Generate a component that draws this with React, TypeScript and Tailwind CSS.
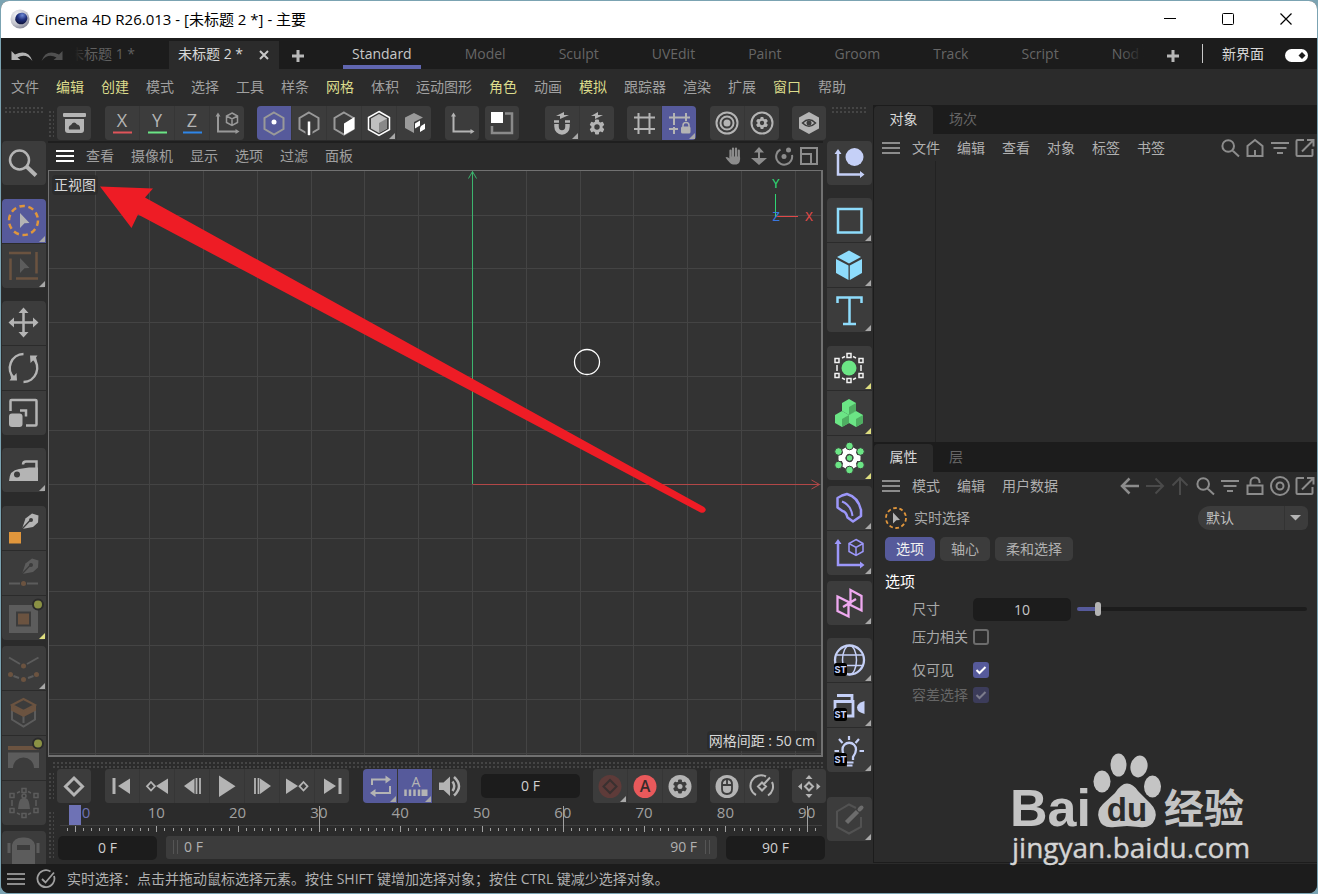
import { useState, type ReactNode } from "react";
import clsx from "clsx";

type Tool = {
  label: string;
  icon: ReactNode;
  active?: boolean;
  disabled?: boolean;
  corner?: "gray" | "yellow";
};

type ToolGroup = {
  className: string;
  tools: Tool[];
};

const GRAY = "#b4b4b4";
const DIM = "#5c5c5c";
const BROWN = "#6b5340";
const ORANGE = "#e0963c";
const PALE = "#c5d0f7";
const CYAN = "#8edcfc";
const GREEN = "#6be585";
const PURPLE = "#9c97fa";
const PINK = "#efa9f0";

/* ---------- small drawing helpers ---------- */

function Small({ children }: { children: ReactNode }) {
  return (
    <svg viewBox="0 0 34 34" className="size-[34px]" fill="none" stroke={GRAY} strokeWidth="2" aria-hidden="true">
      {children}
    </svg>
  );
}

function Big({ children }: { children: ReactNode }) {
  return (
    <svg viewBox="0 0 44 44" className="size-11" fill="none" stroke={GRAY} strokeWidth="2" aria-hidden="true">
      {children}
    </svg>
  );
}

function Hex({ color = "#999" }: { color?: string }) {
  return <path d="M17 6.5 26.5 12V23L17 28.5 7.5 23V12Z" stroke={color} />;
}

function Cog({ cx, cy, r, fill, hole, turn = 0 }: { cx: number; cy: number; r: number; fill: string; hole: string; turn?: number }) {
  return (
    <g transform={`translate(${cx} ${cy}) rotate(${turn})`} stroke="none">
      <circle r={r * 0.76} fill={fill} />
      {[0, 60, 120].map((a) => (
        <rect key={a} x={-r * 0.27} y={-r} width={r * 0.54} height={r * 2} rx="1" fill={fill} transform={`rotate(${a})`} />
      ))}
      <circle r={r * 0.36} fill={hole} />
    </g>
  );
}

function Cursor({ color }: { color: string }) {
  return <path d="M18 14 27.5 24 22.5 24.3 18 29Z" fill={color} stroke="none" />;
}

function Badge() {
  return (
    <g stroke="none">
      <rect x="7" y="25" width="13" height="13" rx="2.5" fill="#000" />
      <text x="13.5" y="35" fontSize="10" fontWeight="700" textAnchor="middle" fill={PALE} fontFamily="Liberation Mono, monospace">
        ST
      </text>
    </g>
  );
}

function AxisLetter({ letter, color }: { letter: string; color: string }) {
  return (
    <Small>
      <text x="17" y="21" fontSize="18" textAnchor="middle" fill={GRAY} stroke="none">
        {letter}
      </text>
      <path d="M8 26.5H27" stroke={color} strokeWidth="2" />
    </Small>
  );
}

function Pen({ color }: { color: string }) {
  return (
    <g stroke="none">
      <path d="M20 23 23.5 12.5 30 7.5 36.5 9.5 36 16.5 31 21Z" fill={color} />
      <path d="M20 23 28 14.5" stroke="#3c3c3c" strokeWidth="1.3" />
      <circle cx="29" cy="14" r="2" fill="#3c3c3c" />
    </g>
  );
}

function Handles({ color }: { color: string }) {
  const pts = [
    [22, 9.5],
    [34, 14.5],
    [34, 29.5],
    [22, 34.5],
    [10, 29.5],
    [10, 14.5],
  ];
  return (
    <g stroke={color} strokeWidth="1.5">
      <path d="M15 12 18 10.5M26 10.5 29 12M34 19V25M29 32 26 33.5M18 33.5 15 32M10 25V19" />
      {pts.map(([x, y]) => (
        <rect key={`${x}-${y}`} x={x - 2} y={y - 2} width="4" height="4" fill="#3c3c3c" />
      ))}
    </g>
  );
}

function MiniCube({ x, y }: { x: number; y: number }) {
  return (
    <g transform={`translate(${x} ${y})`} stroke="none">
      <path d="M0 -8 7 -4V4L0 8 -7 4V-4Z" fill={GREEN} />
      <path d="M0 0 7 -4V4L0 8Z" fill="#4fae62" />
    </g>
  );
}

/* ---------- top tool bar ---------- */

const topGroups: ToolGroup[] = [
  {
    className: "",
    tools: [
      {
        label: "资产浏览器",
        icon: (
          <Small>
            <rect x="6" y="7" width="23" height="4" rx="1" fill={GRAY} stroke="none" />
            <path d="M8 13H27V24Q27 27 24 27H11Q8 27 8 24Z" fill={GRAY} stroke="none" />
            <path d="M12 23.5Q11 20 14 19Q17 14.5 20 18.5Q23.5 19 23 23.5Z" fill="#3c3c3c" stroke="none" />
          </Small>
        ),
      },
    ],
  },
  {
    className: "ml-3.5",
    tools: [
      { label: "X 轴", icon: <AxisLetter letter="X" color="#e0555a" /> },
      { label: "Y 轴", icon: <AxisLetter letter="Y" color="#6be585" /> },
      { label: "Z 轴", icon: <AxisLetter letter="Z" color="#2f86e8" /> },
      {
        label: "坐标系统",
        icon: (
          <Small>
            <path d="M8 9V25.5H26" stroke="#999" />
            <path d="M5.5 10.5 8 6.5 10.5 10.5ZM25.5 23 29.5 25.5 25.5 28Z" fill="#999" stroke="none" />
            <path d="M22 7 27.5 10V16.5L22 19.5 16.5 16.5V10ZM16.5 10 22 13 27.5 10M22 13V19.5" strokeWidth="1.5" stroke="#999" />
          </Small>
        ),
      },
    ],
  },
  {
    className: "ml-[13px]",
    tools: [
      {
        label: "点",
        active: true,
        icon: (
          <Small>
            <Hex />
            <circle cx="17" cy="16" r="2.5" fill="#fff" stroke="none" />
          </Small>
        ),
      },
      {
        label: "边",
        icon: (
          <Small>
            <Hex />
            <path d="M17 15.5V29" stroke="#3c3c3c" strokeWidth="7" />
            <path d="M17 15.5V29" stroke="#fff" strokeWidth="2.5" />
          </Small>
        ),
      },
      {
        label: "多边形",
        icon: (
          <Small>
            <Hex />
            <path d="M17 17.5 27.5 11V23L17 29Z" fill="#fff" stroke="none" />
          </Small>
        ),
      },
      {
        label: "模型",
        corner: "gray",
        icon: (
          <Small>
            <path d="M17 5.5 27.5 11.5V23.5L17 29.5 6.5 23.5V11.5Z" stroke="#fff" strokeWidth="1.5" />
            <path d="M17 8 25 12.5V22.5L17 27 9 22.5V12.5Z" fill="#c0c0c0" stroke="none" />
            <path d="M17 17 25 12.5V22.5L17 27Z" fill="#888" stroke="none" />
          </Small>
        ),
      },
      {
        label: "纹理",
        icon: (
          <Small>
            <path d="M17 7 26 11.5 17 16V27L8 22V11.5Z" fill="#9a9a9a" stroke="none" />
            <path d="M18 17.5 23 14.5V19.5L18 22.5ZM24 20 28 17.5V23L23 26V22Z" fill="#fff" stroke="none" />
          </Small>
        ),
      },
    ],
  },
  {
    className: "ml-3.5",
    tools: [
      {
        label: "启用轴心",
        icon: (
          <Small>
            <path d="M8.5 9V25.5H26" />
            <path d="M6 10.5 8.5 6.5 11 10.5ZM25.5 23 29.5 25.5 25.5 28Z" fill={GRAY} stroke="none" />
          </Small>
        ),
      },
    ],
  },
  {
    className: "ml-1.5",
    tools: [
      {
        label: "工作平面",
        icon: (
          <Small>
            <path d="M20 7.5H27V27H7V20" stroke="#8a8a8a" strokeWidth="2.5" />
            <rect x="6" y="6" width="12" height="11" fill="#fff" stroke="none" />
          </Small>
        ),
      },
    ],
  },
  {
    className: "ml-[26px]",
    tools: [
      {
        label: "捕捉",
        corner: "gray",
        icon: (
          <Small>
            <path d="M11.5 18V20.5A5.5 6 0 0 0 22.5 20.5V18" strokeWidth="4.5" />
            <path d="M9 15.5H14M20 15.5H25" strokeWidth="2.5" />
            <path d="M11 10 19 6V9H24L15 13V10Z" fill={GRAY} stroke="none" />
          </Small>
        ),
      },
      {
        label: "捕捉设置",
        icon: (
          <Small>
            <Cog cx={17} cy={21} r={7.5} fill={GRAY} hole="#3c3c3c" />
            <path d="M11 10 18 6V9H23L15 13V10Z" fill={GRAY} stroke="none" />
          </Small>
        ),
      },
    ],
  },
  {
    className: "ml-[13px]",
    tools: [
      { label: "网格", icon: <Small><path d="M11.5 7V28M22.5 7V28M7 11.5H28M7 23H28" /></Small> },
      {
        label: "锁定网格",
        active: true,
        corner: "gray",
        icon: (
          <Small>
            <path d="M12 7V19M12 21V28M24 7V15M7 11.5H28M7 23H16" />
            <path d="M21 21V19.5A3 3 0 0 1 27 19.5V21" strokeWidth="1.5" />
            <rect x="19" y="20.5" width="9.5" height="7" rx="1.5" fill={GRAY} stroke="none" />
          </Small>
        ),
      },
    ],
  },
  {
    className: "ml-3.5",
    tools: [
      {
        label: "柔和选择",
        icon: (
          <Small>
            <circle cx="17" cy="17" r="10.5" />
            <circle cx="17" cy="17" r="6.5" />
            <circle cx="17" cy="17" r="3.5" fill={GRAY} stroke="none" />
          </Small>
        ),
      },
      {
        label: "选择设置",
        icon: (
          <Small>
            <circle cx="17" cy="17" r="10.5" />
            <Cog cx={17} cy={17} r={6} fill={GRAY} hole="#3c3c3c" />
          </Small>
        ),
      },
    ],
  },
  {
    className: "ml-[13px]",
    tools: [
      {
        label: "独显",
        icon: (
          <Small>
            <path d="M17 6 27 11.5V22.5L17 28 7 22.5V11.5Z" fill={GRAY} stroke="none" />
            <path d="M10.5 17Q17 10.5 23.5 17Q17 23.5 10.5 17Z" stroke="#3c3c3c" strokeWidth="1.5" fill="none" />
            <circle cx="17" cy="17" r="2.5" fill="#3c3c3c" stroke="none" />
          </Small>
        ),
      },
    ],
  },
];

/* ---------- left tools ---------- */

const leftGroups: ToolGroup[] = [
  {
    className: "",
    tools: [
      {
        label: "搜索",
        icon: (
          <Big>
            <circle cx="17.5" cy="19" r="9.5" strokeWidth="2.5" />
            <path d="M24.5 25.5 34 34.5" strokeWidth="4" />
          </Big>
        ),
      },
    ],
  },
  {
    className: "mt-3.5",
    tools: [
      {
        label: "实时选择",
        active: true,
        corner: "gray",
        icon: (
          <Big>
            <circle cx="21.5" cy="21.5" r="14.5" stroke={ORANGE} strokeWidth="2.5" strokeDasharray="5.5 3.61" />
            <Cursor color={GRAY} />
          </Big>
        ),
      },
      {
        label: "框选",
        disabled: true,
        corner: "gray",
        icon: (
          <Big>
            <path d="M7 9H29M34.5 8V29.5M36 34.5H14M8.5 36V14.5" stroke={BROWN} strokeWidth="2.5" />
            <Cursor color={DIM} />
          </Big>
        ),
      },
    ],
  },
  {
    className: "mt-[13px]",
    tools: [
      {
        label: "移动",
        icon: (
          <Big>
            <path d="M21.5 10V33M10 21.5H33" strokeWidth="2.5" />
            <path d="M21.5 6.5 26.5 12H16.5ZM21.5 36.5 16.5 31H26.5ZM6.5 21.5 12 16.5V26.5ZM36.5 21.5 31 26.5V16.5Z" fill={GRAY} stroke="none" />
          </Big>
        ),
      },
      {
        label: "旋转",
        icon: (
          <Big>
            <path d="M21.5 8A14 14 0 0 0 12 32M21.5 36A14 14 0 0 0 31 12" strokeWidth="2.5" />
            <path d="M28 9.5H35.5L34 11.5 35 15 32 13.5 28.5 17ZM15 34.5H7.5L9 32.5 8.5 29 11.5 30.5 14.5 27Z" fill={GRAY} stroke="none" />
          </Big>
        ),
      },
      {
        label: "缩放",
        icon: (
          <Big>
            <path d="M8.5 20V10Q8.5 9 9.5 9H33.5Q34.5 9 34.5 10V33.5Q34.5 34.5 33.5 34.5H24M18 19.5H24V25.5" strokeWidth="2.5" />
            <rect x="7" y="22.5" width="13.5" height="13.5" rx="3" fill={GRAY} stroke="none" />
          </Big>
        ),
      },
    ],
  },
  {
    className: "mt-[13px]",
    tools: [
      {
        label: "放置",
        corner: "gray",
        icon: (
          <Big>
            <path d="M7 33Q7.500 22 17 21L27 19.500H36V33Z" fill={GRAY} stroke="none" />
            <path d="M21 16.500Q21 13.500 24 13.500H34.500V21" strokeWidth="2.500" />
            <circle cx="15" cy="26.500" r="3" fill="#3c3c3c" stroke="none" />
          </Big>
        ),
      },
    ],
  },
  {
    className: "mt-3.5",
    tools: [
      {
        label: "样条画笔",
        icon: (
          <Big>
            <Pen color={GRAY} />
            <rect x="7" y="26" width="12" height="11.5" fill={ORANGE} stroke="none" />
          </Big>
        ),
      },
      {
        label: "草绘",
        disabled: true,
        icon: (
          <Big>
            <Pen color={DIM} />
            <path d="M7 32.5H18M25 32.5H36" stroke={DIM} />
            <circle cx="21.5" cy="32.5" r="2.5" fill={BROWN} stroke="none" />
          </Big>
        ),
      },
      {
        label: "挤压",
        disabled: true,
        corner: "yellow",
        icon: (
          <Big>
            <rect x="7" y="9" width="29" height="28" fill={DIM} stroke="none" />
            <rect x="14" y="15.5" width="15" height="15" fill="#3c3c3c" stroke="none" />
            <rect x="16" y="17.5" width="11" height="11" fill={BROWN} stroke="none" />
            <circle cx="36" cy="8.5" r="5" fill="#8b9244" stroke="#2b2b2b" strokeWidth="2" />
          </Big>
        ),
      },
    ],
  },
  {
    className: "mt-1.5",
    tools: [
      {
        label: "缝合",
        disabled: true,
        corner: "gray",
        icon: (
          <Big>
            <path d="M7 11.5 18 18M25 18 36.5 11.5M11.5 30 17 32M26 32 31.5 30" stroke={DIM} />
            <circle cx="21.5" cy="20" r="2.5" fill={BROWN} stroke="none" />
            <circle cx="21.5" cy="33.5" r="2.5" fill={BROWN} stroke="none" />
            <circle cx="8.5" cy="28.5" r="2.5" fill={BROWN} stroke="none" />
            <circle cx="34.5" cy="28.5" r="2.5" fill={BROWN} stroke="none" />
          </Big>
        ),
      },
      {
        label: "倒角",
        disabled: true,
        icon: (
          <Big>
            <path d="M10 19V28.5L21.5 35.5 33 28.5V19M21.5 24V32" stroke={DIM} />
            <path d="M10 14 21.5 8 33 14 21.5 20Z" stroke={BROWN} />
            <path d="M9 14 21.5 20.5 34 14V19.5L21.5 26 9 19.5Z" fill={BROWN} stroke="none" />
          </Big>
        ),
      },
      {
        label: "桥接",
        disabled: true,
        icon: (
          <Big>
            <path d="M6 12H37" stroke={BROWN} strokeWidth="4" />
            <path d="M6 16.5H37V32H32A10.5 10.5 0 0 0 11 32H6Z" fill={DIM} stroke="none" />
            <circle cx="36" cy="7.5" r="5" fill="#8b9244" stroke="#2b2b2b" strokeWidth="2" />
          </Big>
        ),
      },
      {
        label: "焊接",
        disabled: true,
        icon: (
          <Big>
            <Handles color={DIM} />
            <path d="M16 28Q17 17 20 17.5L22 15.5 24 17.5Q27 17 28 28Z" fill={DIM} stroke="none" />
            <circle cx="22" cy="15" r="2" stroke={DIM} strokeWidth="1.5" />
          </Big>
        ),
      },
    ],
  },
  {
    className: "mt-1.5",
    tools: [
      {
        label: "机器人",
        disabled: true,
        icon: (
          <Big>
            <path d="M10 44V14Q12 6 21.5 6.5Q31 6 33 14V44Z" fill={DIM} stroke="none" />
            <path d="M7 12V22M36 12V22" stroke={DIM} strokeWidth="3" />
            <rect x="15" y="14" width="13" height="5" fill="#3c3c3c" stroke="none" />
          </Big>
        ),
      },
    ],
  },
];

/* ---------- right tools ---------- */

const rightGroups: ToolGroup[] = [
  {
    className: "",
    tools: [
      {
        label: "空对象",
        icon: (
          <Big>
            <path d="M11 12V33.5H34" stroke={PALE} strokeWidth="2.5" />
            <path d="M7.5 13 11 8 14.5 13ZM33 30 37.5 33.5 33 37Z" fill={PALE} stroke="none" />
            <circle cx="27.5" cy="16" r="9" fill={PALE} stroke="none" />
          </Big>
        ),
      },
    ],
  },
  {
    className: "mt-[13px]",
    tools: [
      {
        label: "矩形",
        corner: "gray",
        icon: <Big><rect x="11" y="11" width="23.5" height="23.5" stroke={CYAN} strokeWidth="2.5" /></Big>,
      },
      {
        label: "立方体",
        corner: "gray",
        icon: (
          <Big>
            <g fill={CYAN} stroke="none">
              <path d="M22 7.5 34 14 22 20.5 10 14Z" />
              <path d="M9 16 21.5 22.5V37L9 30Z" />
              <path d="M35 16 22.8 22.5V37L35 30Z" />
            </g>
          </Big>
        ),
      },
      {
        label: "文本",
        corner: "gray",
        icon: <Big><path d="M10.5 15V9.5H34.5V15M22.5 9.5V36M16 36H29" stroke={CYAN} strokeWidth="2.5" /></Big>,
      },
    ],
  },
  {
    className: "mt-3.5",
    tools: [
      {
        label: "细分曲面",
        corner: "yellow",
        icon: (
          <Big>
            <Handles color="#f2f2f2" />
            <circle cx="22" cy="22" r="7.5" fill={GREEN} stroke="none" />
          </Big>
        ),
      },
      {
        label: "克隆",
        corner: "yellow",
        icon: (
          <Big>
            <MiniCube x={22} y={16} />
            <MiniCube x={15} y={28} />
            <MiniCube x={29} y={28} />
          </Big>
        ),
      },
      {
        label: "力场",
        corner: "yellow",
        icon: (
          <Big>
            <Cog cx={22.5} cy={22} r={11} fill="#fff" hole="#3c3c3c" turn={30} />
            <g fill={GREEN} stroke="#3c3c3c" strokeWidth="1">
              <circle cx="22.5" cy="22" r="3.3" />
              <circle cx="22.5" cy="10" r="3.8" />
              <circle cx="22.5" cy="34" r="3.8" />
              <circle cx="11.5" cy="15.5" r="3.8" />
              <circle cx="33.5" cy="15.5" r="3.8" />
              <circle cx="11.5" cy="29" r="3.8" />
              <circle cx="33.5" cy="29" r="3.8" />
            </g>
          </Big>
        ),
      },
    ],
  },
  {
    className: "mt-1.5",
    tools: [
      {
        label: "弯曲",
        corner: "gray",
        icon: (
          <Big>
            <path d="M15 9.5 20 8Q31 11 34 24L34 30 26 35.5 20.5 31.5Q19 25.5 15.5 25L10.5 21.5V12Z" stroke={PURPLE} strokeWidth="2.5" strokeLinejoin="round" />
            <path d="M15 15.5Q24 19 25.5 30" stroke={PURPLE} />
          </Big>
        ),
      },
      {
        label: "域",
        corner: "gray",
        icon: (
          <Big>
            <path d="M11 12V34H34" stroke={PURPLE} strokeWidth="2.5" />
            <path d="M7.5 13 11 8 14.5 13ZM33 30.5 37.5 34 33 37.5Z" fill={PURPLE} stroke="none" />
            <path d="M29 8.5 36 12.5V20.5L29 24.5 22 20.5V12.5ZM22 12.5 29 16.5 36 12.5M29 16.5V24" stroke={PURPLE} strokeWidth="1.5" />
          </Big>
        ),
      },
    ],
  },
  {
    className: "mt-1.5",
    tools: [
      {
        label: "对称",
        corner: "gray",
        icon: (
          <Big>
            <path d="M10.5 15.5 21.5 21V35.5L10.5 30ZM23.5 9 34.5 15V29.5L23.5 24ZM16 26 29 18" stroke={PINK} strokeWidth="2.3" />
          </Big>
        ),
      },
    ],
  },
  {
    className: "mt-[13px]",
    tools: [
      {
        label: "天空",
        corner: "gray",
        icon: (
          <Big>
            <g stroke={PALE}>
              <circle cx="22.5" cy="22" r="14.5" strokeWidth="2.3" />
              <ellipse cx="22.5" cy="22" rx="7" ry="14.5" strokeWidth="1.5" />
              <path d="M10 17H35M10 27.5H35" strokeWidth="1.5" />
            </g>
            <Badge />
          </Big>
        ),
      },
      {
        label: "摄像机",
        corner: "gray",
        icon: (
          <Big>
            <path d="M10 12.5H25V17M8 28V18.5H26V33H20" stroke={PALE} strokeWidth="2.8" />
            <path d="M37.5 18V31Q30 29 30 24.5Q30 20 37.5 18Z" fill={PALE} stroke="none" />
            <Badge />
          </Big>
        ),
      },
      {
        label: "灯光",
        corner: "gray",
        icon: (
          <Big>
            <g stroke={PALE}>
              <path d="M19 29Q15.5 26 15.5 21.5A6.5 6.5 0 0 1 29 21.5Q29 25 26 29V32" strokeWidth="2.3" />
              <path d="M20 34.5H26.5M20 37.5H25.5M22 12V8M28.5 15 32 11M15.5 15 12 11M32.5 23H37M12 23H7.5" strokeWidth="2.2" />
            </g>
            <Badge />
          </Big>
        ),
      },
    ],
  },
  {
    className: "mt-[25px]",
    tools: [
      {
        label: "编辑",
        disabled: true,
        corner: "gray",
        icon: (
          <Big>
            <path d="M29 11 22 7.5 10 14.5V30L22 36.5 34 30V20" stroke="#525252" />
            <path d="M19.5 25.5 30.5 14.5" stroke="#6c6c6c" strokeWidth="4.5" />
            <path d="M32.500 12.500 34.500 10.500" stroke="#6c6c6c" strokeWidth="4" strokeLinecap="round" />
          </Big>
        ),
      },
    ],
  },
];

/* ---------- transport ---------- */

const tri = { fill: GRAY, stroke: "none" };

const transport: Tool[] = [
  { label: "转到开始", icon: <Small><path d="M9 9V25" strokeWidth="3" /><path d="M25 9.5V25L13 17Z" {...tri} /></Small> },
  { label: "上一关键帧", icon: <Small><path d="M11 13 15 17.3 11 21.5 7 17.3Z" strokeWidth="1.8" /><path d="M28 9.5V25L16 17Z" {...tri} /></Small> },
  { label: "上一帧", icon: <Small><path d="M19.5 9.5V25L9 17Z" {...tri} /><path d="M21.5 9V25M25 9V25" strokeWidth="1.8" /></Small> },
  { label: "播放", icon: <Small><path d="M9 6.5V28L25.5 17.3Z" {...tri} /></Small> },
  { label: "下一帧", icon: <Small><path d="M15 9.5V25L26 17Z" {...tri} /><path d="M10 9V25M13.5 9V25" strokeWidth="1.8" /></Small> },
  { label: "下一关键帧", icon: <Small><path d="M6 9.5V25L18 17Z" {...tri} /><path d="M23.5 13 27.5 17.3 23.5 21.5 19.5 17.3Z" strokeWidth="1.8" /></Small> },
  { label: "转到结束", icon: <Small><path d="M9 9.5V25L21 17Z" {...tri} /><path d="M25 9V25" strokeWidth="3" /></Small> },
];

const playback: Tool[] = [
  {
    label: "循环",
    active: true,
    corner: "gray",
    icon: (
      <Small>
        <path d="M9 16V10.5H24M27 17V24H11" />
        <path d="M22.5 6.5 28 10.5 22.5 14.5ZM12.5 20 7 24 12.5 28Z" {...tri} />
      </Small>
    ),
  },
  {
    label: "全部帧",
    active: true,
    corner: "gray",
    icon: (
      <Small>
        <text x="18" y="17.5" fontSize="14" textAnchor="middle" fill={GRAY} stroke="none">A</text>
        <path d="M7.5 20.5V27M12 20.5V27M16.5 20.5V27M21 20.5V27" strokeWidth="2.5" />
        <rect x="23.5" y="20.5" width="6" height="6.5" fill={GRAY} stroke="none" />
      </Small>
    ),
  },
  {
    label: "声音",
    icon: (
      <Small>
        <path d="M6 13.5H10.5L17 7.5V27L10.5 21H6Z" {...tri} />
        <path d="M19.5 12.5Q23 17 19.5 22M21 8Q31 17 21 26.5" strokeWidth="2.5" />
      </Small>
    ),
  },
];

const record: Tool[] = [
  {
    label: "记录",
    corner: "gray",
    disabled: true,
    icon: (
      <Small>
        <circle cx="17" cy="17.5" r="11.5" fill="#5e3b39" stroke="none" />
        <path d="M17 11 23.5 17.5 17 24 10.5 17.5Z" stroke="#3a3030" />
      </Small>
    ),
  },
  {
    label: "自动关键帧",
    icon: (
      <Small>
        <circle cx="17" cy="17.5" r="11.5" fill="#e9595b" stroke="none" />
        <text x="17" y="23" fontSize="16" fontWeight="600" textAnchor="middle" fill="#3a2b2b" stroke="none">A</text>
      </Small>
    ),
  },
  {
    label: "关键帧设置",
    icon: (
      <Small>
        <circle cx="17" cy="17.5" r="11.5" fill={GRAY} stroke="none" />
        <Cog cx={17} cy={17.5} r={7} fill="#3c3c3c" hole={GRAY} />
      </Small>
    ),
  },
];

const motion: Tool[] = [
  {
    label: "鼠标",
    icon: (
      <Small>
        <circle cx="17" cy="17.5" r="11.5" fill={GRAY} stroke="none" />
        <path d="M12 15.5Q12 10 17 10Q22 10 22 15.5V20Q22 25 17 25Q12 25 12 20ZM12 16H22M17 10V16" stroke="#3c3c3c" strokeWidth="1.8" />
      </Small>
    ),
  },
  {
    label: "速度",
    icon: (
      <Small>
        <path d="M11 26A10.5 10.5 0 0 1 21 7.5M27 13A10.5 10.5 0 0 1 23 26.5M17 13.5 21 17.5 17 21.5 13 17.5ZM19 15 25 8.5" />
      </Small>
    ),
  },
];

const navTool: Tool[] = [
  {
    label: "位置",
    icon: (
      <Small>
        <path d="M17 13.5 21 17.5 17 21.5 13 17.5Z" />
        <path d="M17 6 20.5 10H13.5ZM17 29 13.5 25H20.5ZM6 17.5 10 14V21ZM28.5 17.5 24.5 21V14Z" {...tri} />
      </Small>
    ),
  },
];

/* ---------- shared pieces ---------- */

function ToolButton({ tool, size }: { tool: Tool; size: "small" | "big" }) {
  return (
    <button
      type="button"
      aria-label={tool.label}
      aria-pressed={tool.active}
      disabled={tool.disabled}
      className={clsx(
        "relative flex shrink-0 items-center",
        size === "small" ? "size-[34px]" : "h-11 w-full",
        tool.active ? "bg-[#565a9b]" : "bg-[#3c3c3c]",
      )}
    >
      {tool.icon}
      {tool.corner && (
        <svg viewBox="0 0 6 6" className="absolute right-px bottom-px size-1.5" aria-hidden="true">
          <path d="M6 0V6H0Z" fill={tool.corner === "gray" ? "#a8a8a8" : "#dede80"} />
        </svg>
      )}
    </button>
  );
}

function ToolRow({ tools, className }: { tools: Tool[]; className?: string }) {
  return (
    <div className={clsx("flex shrink-0 gap-px overflow-hidden rounded-sm bg-[#363636]", className)}>
      {tools.map((tool) => (
        <ToolButton key={tool.label} tool={tool} size="small" />
      ))}
    </div>
  );
}

function ToolColumn({ groups }: { groups: ToolGroup[] }) {
  return (
    <>
      {groups.map((group) => (
        <div
          key={group.tools[0].label}
          className={clsx("flex shrink-0 flex-col gap-px overflow-hidden rounded-sm bg-[#2b2b2b]", group.className)}
        >
          {group.tools.map((tool) => (
            <ToolButton key={tool.label} tool={tool} size="big" />
          ))}
        </div>
      ))}
    </>
  );
}

function Grip({ className }: { className: string }) {
  return <div className={clsx("shrink-0 bg-[radial-gradient(#454545_1px,transparent_1px)] bg-[size:4px_4px]", className)} />;
}

function Burger({ color }: { color: string }) {
  return (
    <svg viewBox="0 0 20 16" className="h-4 w-5 shrink-0" stroke={color} strokeWidth="2" aria-hidden="true">
      <path d="M1 3H19M1 8H19M1 13H19" />
    </svg>
  );
}

function MenuItems({ items }: { items: string[] }) {
  return (
    <>
      {items.map((item) => (
        <button key={item} type="button" className="shrink-0">
          {item}
        </button>
      ))}
    </>
  );
}

function PanelIcon({ label, dim, children }: { label: string; dim?: boolean; children: ReactNode }) {
  return (
    <button type="button" aria-label={label} className="size-5">
      <svg viewBox="0 0 20 20" className="size-5" fill="none" stroke={dim ? "#4a4a4a" : "#8c8c8c"} strokeWidth="2" aria-hidden="true">
        {children}
      </svg>
    </button>
  );
}

const searchPath = <path d="M14 8A5.8 5.8 0 1 1 2.4 8A5.8 5.8 0 1 1 14 8ZM12.3 12.3 19 18.5" />;
const filterPath = <path d="M1 5H19M3.5 10H16.5M7 15H13" />;
const openPath = <path d="M9 2H2.5Q1.5 2 1.5 3V17Q1.5 18 2.5 18H16.5Q17.5 18 17.5 17V11M7 13.5 17.5 3M12 2H18.5V8.5" />;

function Tabs({ active, other }: { active: string; other: string }) {
  return (
    <div className="flex h-7 shrink-0 bg-[#1c1c1c]" role="tablist">
      <button type="button" role="tab" aria-selected="true" className="w-[59px] rounded-t-sm bg-[#2b2b2b] pb-0.5 text-[#d8d8d8]">
        {active}
      </button>
      <button type="button" role="tab" aria-selected="false" className="px-4 pb-0.5 text-[#666]">
        {other}
      </button>
    </div>
  );
}

/* ---------- page parts ---------- */

function TitleBar() {
  return (
    <header className="flex h-[37px] shrink-0 items-center bg-white pr-0.5 pb-px pl-[9px] text-black">
      <svg viewBox="0 0 20 20" className="size-5" aria-hidden="true">
        <defs>
          <radialGradient id="shell" cx="0.35" cy="0.3" r="0.8">
            <stop offset="0" stopColor="#f4f4f8" />
            <stop offset="0.6" stopColor="#c2c3cc" />
            <stop offset="1" stopColor="#77798a" />
          </radialGradient>
          <radialGradient id="core" cx="0.7" cy="0.3" r="0.8">
            <stop offset="0" stopColor="#6f8ad6" />
            <stop offset="0.5" stopColor="#1f2f7c" />
            <stop offset="1" stopColor="#0a0f35" />
          </radialGradient>
        </defs>
        <circle cx="10" cy="10" r="9.5" fill="url(#shell)" />
        <ellipse cx="11.3" cy="9.5" rx="6.2" ry="5.7" fill="url(#core)" transform="rotate(-30 11.3 9.5)" />
      </svg>
      <h1 className="ml-[5px] flex-1 text-[15px] leading-5">Cinema 4D R26.013 - [未标题 2 *] - 主要</h1>
      <div className="flex">
        <button type="button" aria-label="最小化" className="flex h-9 w-[58px] items-center justify-center">
          <svg viewBox="0 0 12 12" className="size-3" stroke="#000"><path d="M0 5.5H12" /></svg>
        </button>
        <button type="button" aria-label="最大化" className="flex h-9 w-[58px] items-center justify-center">
          <svg viewBox="0 0 12 12" className="size-3" fill="none" stroke="#000"><rect x="0.5" y="0.5" width="11" height="11" rx="1" /></svg>
        </button>
        <button type="button" aria-label="关闭" className="flex h-9 w-[58px] items-center justify-center">
          <svg viewBox="0 0 12 12" className="size-3" stroke="#000" strokeWidth="1.2"><path d="M0.5 0.5 11.5 11.5M11.5 0.5 0.5 11.5" /></svg>
        </button>
      </div>
    </header>
  );
}

function Plus() {
  return (
    <svg viewBox="0 0 12 12" className="size-3" stroke="#b8b8b8" strokeWidth="3"><path d="M6 0V12M0 6H12" /></svg>
  );
}

const layouts = ["Standard", "Model", "Sculpt", "UVEdit", "Paint", "Groom", "Track", "Script", "Nod"];

function TabBar() {
  return (
    <div className="flex h-[31px] shrink-0 items-stretch bg-[#1c1c1c]">
      <div className="flex w-[69px] shrink-0 items-center gap-2 pt-1 pl-2.5">
        <button type="button" aria-label="撤销">
          <svg viewBox="0 0 22 14" className="h-3.5 w-[22px]" aria-hidden="true">
            <path d="M0.5 2V11H9.5L6.5 8.5Q15 3.5 21.5 12Q17 -0.5 4 5.5Z" fill="#b4b4b4" />
          </svg>
        </button>
        <button type="button" aria-label="重做">
          <svg viewBox="0 0 22 14" className="h-3.5 w-[22px]" aria-hidden="true">
            <path d="M21.5 2V11H12.5L15.5 8.5Q7 3.5 0.5 12Q5 -0.5 18 5.5Z" fill="#505050" />
          </svg>
        </button>
      </div>
      <button type="button" className="relative w-[99px] shrink-0 text-left text-[#606060]">
        未标题 1 *
        <span className="absolute inset-y-0 left-0 w-5 bg-linear-to-r from-[#1c1c1c] from-25% to-transparent" />
      </button>
      <div className="mt-[3px] flex w-[110px] shrink-0 items-center justify-between bg-[#2b2b2b] pr-2.5 pb-0.5 pl-[9px] text-[#d8d8d8]">
        <button type="button">未标题 2 *</button>
        <button type="button" aria-label="关闭标签" className="pt-0.5">
          <svg viewBox="0 0 10 10" className="size-2.5" stroke="#c8c8c8" strokeWidth="2"><path d="M1 1 9 9M9 1 1 9" /></svg>
        </button>
      </div>
      <button type="button" aria-label="新建文档" className="ml-[13px] pt-1">
        <Plus />
      </button>
      <nav className="relative ml-[39px] flex min-w-0 flex-1 gap-[35px] overflow-hidden">
        {layouts.map((name, i) => (
          <button
            key={name}
            type="button"
            className={clsx(
              "shrink-0 border-b-4 px-[9px] pt-[5px]",
              i === 0 ? "border-[#6066b0] text-[#c8c8c8]" : "border-transparent text-[#666]",
            )}
          >
            {name}
          </button>
        ))}
        <span className="absolute inset-y-0 right-0 w-6 bg-linear-to-r from-transparent to-[#1c1c1c]" />
      </nav>
      <button type="button" aria-label="新建界面" className="ml-[23px] pt-1">
        <Plus />
      </button>
      <span className="my-1.5 ml-[23px] w-px bg-[#c8c8c8]" />
      <label htmlFor="new-layout" className="ml-[19px] flex items-center text-[#d8d8d8]">新界面</label>
      <button id="new-layout" type="button" role="switch" aria-checked="true" aria-label="新界面" className="mr-[9px] ml-[21px] pt-1">
        <svg viewBox="0 0 23 13" className="h-[13px] w-[23px]" aria-hidden="true">
          <rect width="23" height="13" rx="6.5" fill="#fff" />
          <path d="M17 3 20.5 6.5 17 10 13.5 6.5Z" fill="#1c1c1c" />
        </svg>
      </button>
    </div>
  );
}

const menus = [
  "文件", "编辑", "创建", "模式", "选择", "工具", "样条", "网格", "体积", "运动图形",
  "角色", "动画", "模拟", "跟踪器", "渲染", "扩展", "窗口", "帮助",
];
const marked = ["编辑", "创建", "网格", "角色", "模拟", "窗口"];

function MenuBar() {
  return (
    <nav className="flex h-9 shrink-0 items-center gap-[17px] pl-2.5">
      {menus.map((item) => (
        <button key={item} type="button" className={clsx("shrink-0", marked.includes(item) ? "text-[#dcdc8c]" : "text-[#a0a0a0]")}>
          {item}
        </button>
      ))}
    </nav>
  );
}

const gridX = [46, 100, 154, 208, 262, 315, 369, 423, 477, 531, 584, 638, 692, 746];
const gridY = [44, 97, 151, 205, 259, 313, 367, 420, 474, 528, 582];

function Viewport() {
  return (
    <section className="flex min-h-0 flex-1 flex-col border-t-2 border-[#1f1f1f]">
      <div className="flex h-[27px] shrink-0 items-center gap-[17px] pr-1 pb-px pl-[7px] text-[#a0a0a0]">
        <button type="button" aria-label="视图菜单" className="-mr-1.5">
          <Burger color="#fff" />
        </button>
        <MenuItems items={["查看", "摄像机", "显示", "选项", "过滤", "面板"]} />
        <div className="ml-auto flex gap-[5px]">
          <PanelIcon label="平移">
            <path d="M6.5 4.5V11M9 2.5V11M12 2.5V11M14.8 4.5V12" strokeWidth="2.2" strokeLinecap="round" />
            <path d="M5.5 10.5H16Q17 17 12.5 18.5H9Q6 18 1.5 11.5Q3 10 5.5 12.5Z" fill="#8c8c8c" stroke="none" />
          </PanelIcon>
          <PanelIcon label="推拉">
            <path d="M10 5V14" />
            <path d="M10 1 15 6.5H5ZM10 19 2 12H18Z" fill="#8c8c8c" stroke="none" />
          </PanelIcon>
          <PanelIcon label="旋转视图">
            <path d="M6.5 3.5A8 8 0 1 0 18 9" />
            <circle cx="10" cy="10.5" r="2.5" fill="#8c8c8c" stroke="none" />
            <circle cx="14.5" cy="4" r="2.5" fill="#8c8c8c" stroke="none" />
          </PanelIcon>
          <PanelIcon label="切换视图">
            <path d="M2 2H18V18H2ZM2 8H12V18" />
          </PanelIcon>
        </div>
      </div>
      <div className="relative min-h-0 flex-1 overflow-hidden border-t border-r-2 border-b-2 border-l border-[#717171] bg-[#333]">
        <svg className="block size-full" role="img" aria-label="正视图网格">
          <g stroke="#444">
            {gridX.map((x) => (
              <path key={x} d={`M${x + 0.5} 0V2000`} />
            ))}
            {gridY.map((y) => (
              <path key={y} d={`M0 ${y + 0.5}H3000`} />
            ))}
          </g>
          <path d="M423.5 313V0.5M419.5 7.5 423.5 0.5 427.5 7.5" stroke="#3cb46e" fill="none" />
          <path d="M423.5 313.5H770.5M762.5 309 770.5 313.5 762.5 318" stroke="#b24747" fill="none" />
          <g fontSize="13" textAnchor="middle" fontFamily="DejaVu Sans Mono, monospace">
            <path d="M726.5 23V46" stroke="#2fd573" />
            <path d="M727 45.5H749" stroke="#e04848" />
            <text x="727" y="17" fill="#2fd573">Y</text>
            <text x="727" y="50" fill="#3a78e0">Z</text>
            <text x="760" y="50" fill="#e04848">X</text>
          </g>
          <circle cx="538" cy="191" r="12.5" fill="none" stroke="#fff" strokeWidth="1.3" />
          <path
            d="M51 15.5 104 17.5 96 26.5 655 336Q658 338.5 656 340.5Q654.5 342.5 651.5 341.5L89 43.5 82.5 57Z"
            fill="#ee1c25"
          />
        </svg>
        <span className="absolute top-1 left-[3px] rounded-sm bg-[#2b2b2b]/80 px-0.5 leading-5 text-[#d8d8d8]">正视图</span>
        <span className="absolute right-1 bottom-1 rounded-sm bg-[#2b2b2b]/80 px-0.5 leading-5 text-[#d8d8d8]">网格间距 : 50 cm</span>
      </div>
    </section>
  );
}

const TICK = 8.13;

function Ruler() {
  return (
    <svg className="block h-8 w-full overflow-visible" role="img" aria-label="时间线">
      <path d="M12 22.5H774" stroke="#3e3e3e" />
      <rect x="21" y="2" width="12" height="20" fill="#6e72b5" />
      {Array.from({ length: 93 }, (_, i) => {
        const frame = i - 1;
        const x = Math.round(27 + frame * TICK) + 0.5;
        const major = frame % 10 === 0;
        const top = frame > 0 && frame % 30 === 0 ? 3 : major ? 23 : 25;
        return <path key={frame} d={`M${x} ${top}V${major ? 29 : 28}`} stroke="#a0a0a0" />;
      })}
      <g fontSize="15" textAnchor="middle" fill="#a0a0a0">
        <text x="38" y="15" fill="#6e72b5">0</text>
        {[10, 20, 30, 40, 50, 60, 70, 80, 90].map((n) => (
          <text key={n} x={27 + n * TICK} y="15">{n}</text>
        ))}
      </g>
    </svg>
  );
}

function FrameField({ label, value }: { label: string; value: string }) {
  return (
    <input
      aria-label={label}
      defaultValue={value}
      className="h-6 w-[99px] shrink-0 rounded-[5px] bg-[#1c1c1c] pb-0.5 text-center text-[#d0d0d0]"
    />
  );
}

function Timeline() {
  return (
    <section className="flex h-[107px] shrink-0 flex-col">
      <Grip className="mt-1 ml-1 h-2" />
      <div className="flex items-center">
        <Grip className="mr-[3px] h-7 w-1.5" />
        <ToolRow tools={[{ label: "关键帧", icon: <Small><path d="M17 9 25.5 17.5 17 26 8.5 17.5Z" strokeWidth="3" /></Small> }]} />
        <ToolRow className="ml-3.5" tools={transport} />
        <ToolRow className="ml-3.5" tools={playback} />
        <div className="ml-3.5 flex"><FrameField label="当前帧" value="0 F" /></div>
        <ToolRow className="ml-[13px]" tools={record} />
        <ToolRow className="ml-[13px]" tools={motion} />
        <ToolRow className="ml-[13px]" tools={navTool} />
      </div>
      <div className="flex">
        <div className="-mr-px w-px"><Grip className="mt-2 h-12 w-1.5" /></div>
        <div className="min-w-0 flex-1">
          <Ruler />
          <div className="-mr-0.5 flex gap-[9px] pt-px pl-2.5">
            <FrameField label="起始帧" value="0 F" />
            <div className="flex h-[23px] flex-1 items-center justify-between rounded-[3px] bg-[#3c3c3c] px-[7px] pb-0.5 text-[#b0b0b0]">
              <span className="flex items-center gap-1.5">
                <i className="h-3.5 w-[5px] border-x border-[#555]" />0 F
              </span>
              <span className="flex items-center gap-2">
                90 F<i className="h-3.5 w-[5px] border-x border-[#555]" />
              </span>
            </div>
            <FrameField label="结束帧" value="90 F" />
          </div>
        </div>
      </div>
    </section>
  );
}

function ObjectPanel() {
  return (
    <section className="flex h-[338px] shrink-0 flex-col border-b-2 border-[#1c1c1c]">
      <Tabs active="对象" other="场次" />
      <div className="flex h-[27px] shrink-0 items-center gap-[17px] pr-0.5 pl-[7px] text-[#b0b0b0]">
        <button type="button" aria-label="对象菜单" className="-mr-1.5"><Burger color="#8c8c8c" /></button>
        <MenuItems items={["文件", "编辑", "查看", "对象", "标签", "书签"]} />
        <div className="ml-auto flex gap-[5px]">
          <PanelIcon label="搜索">{searchPath}</PanelIcon>
          <PanelIcon label="主页"><path d="M2.5 18V8L10 2 17.5 8V18ZM10 18V12" /></PanelIcon>
          <PanelIcon label="过滤">{filterPath}</PanelIcon>
          <PanelIcon label="弹出">{openPath}</PanelIcon>
        </div>
      </div>
      <div className="flex min-h-0 flex-1">
        <div className="w-[62px] border-r border-[#222]" />
      </div>
    </section>
  );
}

function CheckRow({ id, label, checked, disabled, className }: { id: string; label: string; checked: boolean; disabled?: boolean; className?: string }) {
  const [on, setOn] = useState(checked);
  return (
    <div className={clsx("flex h-[25px] items-center", className)}>
      <label htmlFor={id} className={clsx("w-[61px]", disabled && "text-[#666]")}>{label}</label>
      <span className="relative flex">
        <input
          id={id}
          type="checkbox"
          checked={on}
          disabled={disabled}
          onChange={() => setOn(!on)}
          className="size-4 appearance-none rounded-[3px] border-2 border-[#6c6c6c] checked:border-[#565a9b] checked:bg-[#565a9b] disabled:border-[#3c3c5a] disabled:bg-[#3c3c5a]"
        />
        {on && (
          <svg viewBox="0 0 16 16" className="pointer-events-none absolute inset-0 size-4" fill="none" stroke={disabled ? "#7c7c8c" : "#fff"} strokeWidth="2">
            <path d="M3.5 8 6.5 11 12.5 5" />
          </svg>
        )}
      </span>
    </div>
  );
}

function AttributePanel() {
  const [size, setSize] = useState(10);
  return (
    <section className="flex min-h-0 flex-1 flex-col">
      <Tabs active="属性" other="层" />
      <div className="flex h-7 shrink-0 items-center gap-[17px] pr-0.5 pl-[7px] text-[#b0b0b0]">
        <button type="button" aria-label="属性菜单" className="-mr-1.5"><Burger color="#8c8c8c" /></button>
        <MenuItems items={["模式", "编辑", "用户数据"]} />
        <div className="ml-auto flex gap-[5px]">
          <PanelIcon label="后退"><path d="M19 10H2.5M9.5 2.5 2 10 9.5 17.5" strokeWidth="2.5" /></PanelIcon>
          <PanelIcon label="前进" dim><path d="M1 10H17.5M10.5 2.5 18 10 10.5 17.5" /></PanelIcon>
          <PanelIcon label="向上" dim><path d="M10 19V2.5M2.5 9.5 10 2 17.5 9.5" /></PanelIcon>
          <PanelIcon label="搜索属性">{searchPath}</PanelIcon>
          <PanelIcon label="过滤属性">{filterPath}</PanelIcon>
          <PanelIcon label="锁定"><path d="M2.5 9.5H17.5V18H2.5ZM5.5 9V6A4.5 4.5 0 0 1 14.5 6V7" /></PanelIcon>
          <PanelIcon label="模式锁定"><circle cx="10" cy="10" r="9" /><circle cx="10" cy="10" r="3.5" /></PanelIcon>
          <PanelIcon label="弹出属性">{openPath}</PanelIcon>
        </div>
      </div>
      <div className="flex h-9 shrink-0 items-center pr-[9px] pl-2.5 text-[#a8a8a8]">
        <svg viewBox="0 0 24 24" className="size-6" fill="none" aria-hidden="true">
          <circle cx="12" cy="12" r="10" stroke={ORANGE} strokeWidth="1.8" strokeDasharray="3.7 2.58" />
          <path d="M9 6.500 16 14 12.300 14.200 9 17.500Z" fill="#b4b4b4" />
        </svg>
        <h2 className="ml-1.5 flex-1">实时选择</h2>
        <div className="relative">
          <select aria-label="预设" className="h-6 w-[110px] appearance-none rounded-l-xl rounded-r-md bg-[#3c3c3c] pl-2 text-[#c0c0c0]">
            <option>默认</option>
          </select>
          <svg viewBox="0 0 24 24" className="pointer-events-none absolute top-0 right-0 size-6" aria-hidden="true">
            <path d="M0.5 0V24" stroke="#333" />
            <path d="M6 9H17L11.5 14.5Z" fill="#b4b4b4" />
          </svg>
        </div>
      </div>
      <div className="mt-px flex gap-[5px] pl-[11px]">
        <button type="button" className="h-6 rounded-[5px] bg-[#565a9b] px-[11px] text-[#f0f0f0]">选项</button>
        <button type="button" className="h-6 rounded-[5px] bg-[#3c3c3c] px-[11px] text-[#b0b0b0]">轴心</button>
        <button type="button" className="h-6 rounded-[5px] bg-[#3c3c3c] px-[11px] text-[#b0b0b0]">柔和选择</button>
      </div>
      <h3 className="mt-2.5 pl-[11px] text-[15px] leading-5 text-white">选项</h3>
      <div className="mt-1.5 pr-2.5 pl-[38px] text-[#a8a8a8]">
        <div className="flex h-6 items-center">
          <label htmlFor="size" className="w-[61px]">尺寸</label>
          <input
            id="size"
            value={size}
            onChange={(e) => setSize(Number(e.target.value) || 0)}
            className="h-[23px] w-[98px] rounded-[5px] bg-[#1c1c1c] text-center text-[#c8c8c8]"
          />
          <input
            type="range"
            aria-label="尺寸滑块"
            min="0"
            max="125"
            value={size}
            onChange={(e) => setSize(Number(e.target.value))}
            className="ml-1.5 h-4 min-w-0 flex-1 appearance-none bg-transparent [&::-webkit-slider-runnable-track]:h-1 [&::-webkit-slider-runnable-track]:rounded-full [&::-webkit-slider-runnable-track]:bg-linear-to-r [&::-webkit-slider-runnable-track]:from-[#565a9b] [&::-webkit-slider-runnable-track]:from-9% [&::-webkit-slider-runnable-track]:to-[#1c1c1c] [&::-webkit-slider-runnable-track]:to-9% [&::-webkit-slider-thumb]:-mt-[5px] [&::-webkit-slider-thumb]:h-3.5 [&::-webkit-slider-thumb]:w-1.5 [&::-webkit-slider-thumb]:appearance-none [&::-webkit-slider-thumb]:rounded-[3px] [&::-webkit-slider-thumb]:bg-[#b4b4b4]"
          />
        </div>
        <CheckRow id="pressure" label="压力相关" checked={false} className="mt-[3px]" />
        <CheckRow id="visible" label="仅可见" checked className="mt-2" />
        <CheckRow id="tolerance" label="容差选择" checked disabled />
      </div>
    </section>
  );
}

function Watermark() {
  return (
    <svg viewBox="0 0 240 114" className="pointer-events-none absolute right-[66px] bottom-[27px] h-[114px] w-60 overflow-visible" role="img" aria-label="Baidu 经验">
      <g fill="#c4c4c4">
        <text x="-1" y="74" fontSize="52" fontWeight="700" fontFamily="Liberation Sans, sans-serif">Bai</text>
        <ellipse cx="91" cy="29.5" rx="8.5" ry="11" />
        <ellipse cx="107.5" cy="13" rx="8" ry="11.5" />
        <ellipse cx="128" cy="14.5" rx="8.5" ry="11" transform="rotate(12 128 14.5)" />
        <ellipse cx="141.5" cy="34.5" rx="8.5" ry="11" />
        <path d="M116 31.5Q122 31.5 127 39L139 51Q147 59 144 67Q140 77 128 75L116 74 104 75Q91 77 88 67Q85 59 92 52L104 41Q110 31.5 116 31.5Z" />
        <text x="153" y="71" fontSize="40" fontWeight="700" fontFamily="Noto Sans CJK SC, sans-serif">经验</text>
      </g>
      <text x="116" y="69" fontSize="33" fontWeight="700" textAnchor="middle" fill="#2b2b2b" fontFamily="Liberation Sans, sans-serif">du</text>
      <text x="1" y="106" fontSize="28" fill="#d4d4d4" stroke="#d4d4d4" strokeWidth="0.4" fontFamily="Open Sans, sans-serif">jingyan.baidu.com</text>
    </svg>
  );
}

export default function App() {
  return (
    <div className="h-screen bg-[#7ba3b2] p-px font-['Open_Sans','Noto_Sans_CJK_SC',sans-serif] text-sm leading-5">
      <div className="relative flex h-full flex-col overflow-hidden rounded-lg bg-[#2b2b2b]">
        <TitleBar />
        <TabBar />
        <MenuBar />
        <div className="flex min-h-0 flex-1">
          <main className="flex min-w-0 flex-1 flex-col overflow-hidden">
            <div className="flex h-9 shrink-0 items-start pt-px">
              <Grip className="mr-[5px] ml-[3px] h-2 w-[39px]" />
              <Grip className="mt-1 mr-[3px] h-7 w-1.5" />
              {topGroups.map((group) => (
                <ToolRow key={group.tools[0].label} tools={group.tools} className={group.className} />
              ))}
              <Grip className="ml-[5px] h-2 w-9" />
            </div>
            <div className="flex min-h-0 flex-1">
              <aside className="flex w-[47px] shrink-0 flex-col overflow-hidden pr-0.5 pl-px">
                <ToolColumn groups={leftGroups} />
              </aside>
              <div className="flex min-w-0 flex-1 flex-col">
                <Viewport />
                <Timeline />
              </div>
              <aside className="flex w-[50px] shrink-0 flex-col overflow-hidden pr-px pl-1">
                <ToolColumn groups={rightGroups} />
              </aside>
            </div>
          </main>
          <aside className="mb-px flex w-[444px] shrink-0 flex-col border-t border-b border-l border-[#1c1c1c]">
            <ObjectPanel />
            <AttributePanel />
          </aside>
        </div>
        <footer className="flex h-[29px] shrink-0 items-center bg-[#1c1c1c] pl-[5px] text-[#b0b0b0]">
          <button type="button" aria-label="菜单"><Burger color="#8c8c8c" /></button>
          <svg viewBox="0 0 20 20" className="ml-2.5 size-5" fill="none" stroke="#a0a0a0" strokeWidth="1.8" aria-hidden="true">
            <path d="M14.5 2.5A8.5 8.5 0 1 0 18 7M6 10 9.5 13.5 18 3.5" />
          </svg>
          <p className="ml-[11px] truncate">实时选择：点击并拖动鼠标选择元素。按住 SHIFT 键增加选择对象；按住 CTRL 键减少选择对象。</p>
        </footer>
        <Watermark />
      </div>
    </div>
  );
}
